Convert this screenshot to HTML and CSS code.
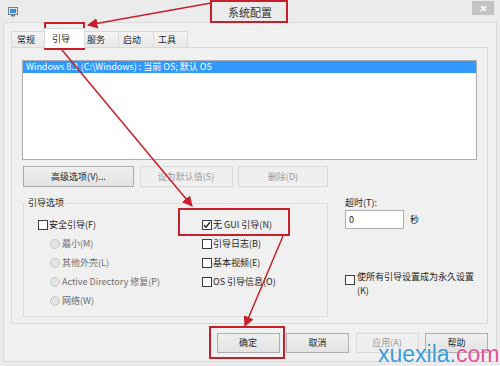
FILE: index.html
```html
<!DOCTYPE html>
<html lang="zh-CN">
<head>
<meta charset="UTF-8" />
<meta name="viewport" content="width=device-width, initial-scale=1" />
<title>系统配置</title>
<link rel="stylesheet" href="styles.css">
</head>
<body>

<div class="window">
  <div class="titlebar">
    <svg class="app-icon" width="10" height="10" viewBox="0 0 10 10">
      <rect x="0.5" y="0.5" width="9" height="7" fill="#dfe6ee" stroke="#6f7f90"/>
      <rect x="2" y="2" width="6" height="4" fill="#3d8fd6"/>
      <rect x="3" y="8" width="4" height="1.5" fill="#6f7f90"/>
    </svg>
    <div class="title">系统配置</div>
    <div class="close">
      <svg width="7" height="7" viewBox="0 0 7 7"><path d="M1 1 L6 6 M6 1 L1 6" stroke="#fff" stroke-width="1.6"/></svg>
    </div>
  </div>

  <div class="client">
    <div class="tabs">
      <div class="tab tab-general">常规</div>
      <div class="tab tab-boot active">引导</div>
      <div class="tab tab-services">服务</div>
      <div class="tab tab-startup">启动</div>
      <div class="tab tab-tools">工具</div>
    </div>

    <div class="panel">
      <div class="oslist">
        <div class="os-item selected">Windows 8.1 (C:\Windows) : 当前 OS; 默认 OS</div>
      </div>

      <div class="list-buttons">
        <button class="btn btn-advanced">高级选项(V)...</button>
        <button class="btn btn-default" disabled>设为默认值(S)</button>
        <button class="btn btn-delete" disabled>删除(D)</button>
      </div>

      <div class="lower">
        <fieldset class="group">
          <legend>引导选项</legend>
          <div class="group-cols">
            <div class="col col-left">
              <div class="opt"><span class="cb"></span>安全引导(F)</div>
              <div class="opt sub disabled"><span class="rb"></span>最小(M)</div>
              <div class="opt sub disabled"><span class="rb"></span>其他外壳(L)</div>
              <div class="opt sub disabled"><span class="rb"></span>Active Directory 修复(P)</div>
              <div class="opt sub disabled"><span class="rb"></span>网络(W)</div>
            </div>
            <div class="col">
              <div class="opt">
                <span class="cb">
                  <svg width="8" height="8" viewBox="0 0 8 8"><path d="M1 4.2 L3 6.3 L7 1.2" fill="none" stroke="#222" stroke-width="1.4"/></svg>
                </span>无 GUI 引导(N)
              </div>
              <div class="opt"><span class="cb"></span>引导日志(B)</div>
              <div class="opt"><span class="cb"></span>基本视频(E)</div>
              <div class="opt"><span class="cb"></span>OS 引导信息(O)</div>
            </div>
          </div>
        </fieldset>

        <div class="side">
          <div class="timeout-label">超时(T):</div>
          <div class="timeout-row">
            <div class="input">0</div>
            <span class="unit">秒</span>
          </div>
          <div class="perm">
            <span class="cb"></span>
            <span class="perm-text">使所有引导设置成为永久设置<br>(K)</span>
          </div>
        </div>
      </div>
    </div>

    <div class="footer">
      <button class="btn btn-footer">确定</button>
      <button class="btn btn-footer">取消</button>
      <button class="btn btn-footer" disabled>应用(A)</button>
      <button class="btn btn-footer">帮助</button>
    </div>
  </div>

  <!-- red annotation marks drawn over the dialog -->
  <svg class="marks" width="500" height="366" viewBox="0 0 500 366">
    <defs>
      <marker id="head" viewBox="0 0 10 10" refX="9" refY="5" markerWidth="7" markerHeight="7" orient="auto">
        <path d="M0 0 L10 5 L0 10 z" fill="#c8202a"/>
      </marker>
    </defs>
    <g fill="none" stroke="#c8202a" stroke-width="2">
      <rect x="211" y="1" width="76" height="21"/>
      <rect x="45" y="23" width="39" height="26"/>
      <rect x="179" y="209" width="110" height="26"/>
      <rect x="210" y="327" width="74" height="31"/>
    </g>
    <g stroke="#c8202a" stroke-width="1.5" marker-end="url(#head)">
      <line x1="211" y1="3" x2="88" y2="25"/>
      <line x1="62" y1="50" x2="192" y2="206"/>
      <line x1="283" y1="236" x2="245" y2="326"/>
    </g>
  </svg>

  <div class="watermark">xuexila.<span class="com">com</span></div>
</div>

</body>
</html>
```

FILE: styles.css
```css
body {
  margin: 0;
  width: 500px;
  height: 366px;
  overflow: hidden;
  background: #ebebeb;
  font-family: "Noto Sans CJK SC", "Noto Sans", sans-serif;
  font-size: 9px;
  color: #1e1e1e;
}
.window {
  position: relative;
  height: 366px;
  display: flex;
  flex-direction: column;
}

/* title bar */
.titlebar {
  height: 22px;
  flex: none;
  display: flex;
  align-items: flex-start;
  padding-left: 8px;
}
.app-icon {
  margin-top: 7px;
  flex: none;
}
.title {
  flex: 1;
  text-align: center;
  padding-left: 10px;
  padding-top: 2px;
  font-size: 11px;
  line-height: 20px;
  color: #333;
}
.close {
  width: 22px;
  height: 14px;
  margin: 1px 6px 0 0;
  background: #c2c2c2;
  display: flex;
  align-items: center;
  justify-content: center;
}

/* client area */
.client {
  flex: 1;
  margin: 0 3px 4px;
  border: 1px solid #dadada;
  background: #f0f0f0;
  padding: 8px 8px 0 7px;
  display: flex;
  flex-direction: column;
}

/* tabs */
.tabs {
  display: flex;
  align-items: flex-end;
  height: 16px;
  position: relative;
  z-index: 1;
}
.tab {
  height: 16px;
  box-sizing: border-box;
  border: 1px solid #d9d9d9;
  border-bottom: none;
  background: linear-gradient(#f3f3f3, #e9e9e9);
  padding-left: 4px;
  line-height: 15px;
  margin-left: -1px;
}
.tab-general { width: 34px; margin-left: 0; padding-left: 5px; }
.tab-boot { width: 41px; padding-left: 7px; }
.tab-services { width: 35px; padding-left: 2px; }
.tab-startup { width: 36px; padding-left: 4px; }
.tab-tools { width: 35px; padding-left: 4px; }
.tab.active {
  height: 20px;
  margin-bottom: -1px;
  background: #fff;
  line-height: 19px;
}

/* tab page */
.panel {
  height: 277px;
  box-sizing: border-box;
  border: 1px solid #d9d9d9;
  background: #f0f0f0;
  padding: 12px 10px 0;
}
.oslist {
  height: 100px;
  box-sizing: border-box;
  border: 1px solid #abadb3;
  background: #fff;
}
.os-item {
  height: 12px;
  line-height: 12px;
  padding-left: 3px;
}
.os-item.selected {
  background: #3399ff;
  color: #fff;
}

/* buttons */
.btn {
  height: 21px;
  box-sizing: border-box;
  border: 1px solid #adadad;
  background: linear-gradient(#efefef, #e3e3e3);
  font: inherit;
  line-height: 12px;
  color: #1e1e1e;
  padding: 0;
}
.btn:disabled {
  border-color: #d9d9d9;
  background: #efefef;
  color: #9c9c9c;
}
.list-buttons {
  display: flex;
  gap: 5.5px;
  margin: 6px 0 0 1px;
}
.btn-advanced { width: 111px; }
.btn-default { width: 93px; }
.btn-delete { width: 90px; }

/* lower section */
.lower {
  display: flex;
  margin: 10px 0 0 1px;
}
.group {
  margin: 0;
  width: 305px;
  height: 120px;
  box-sizing: border-box;
  border: 1px solid #dcdcdc;
  padding: 0;
}
.group legend {
  padding: 0 2px;
  margin-left: 2px;
  line-height: 12px;
}
.group-cols {
  display: flex;
  padding: 6px 0 0 14px;
}
.col-left { width: 164px; }
.opt {
  display: flex;
  align-items: center;
  height: 19px;
  white-space: nowrap;
}
.opt.sub { padding-left: 12px; }
.opt.disabled { color: #6d6d6d; }
.cb {
  width: 10px;
  height: 10px;
  box-sizing: border-box;
  border: 1px solid #3c3c3c;
  background: #fff;
  margin-right: 1px;
  flex: none;
  display: flex;
  align-items: center;
  justify-content: center;
}
.rb {
  width: 10px;
  height: 10px;
  box-sizing: border-box;
  border: 1px solid #c6c6c6;
  border-radius: 50%;
  background: #e4e4e4;
  margin-right: 2px;
  flex: none;
}

.side {
  margin-left: 17px;
  display: flex;
  flex-direction: column;
}
.timeout-label {
  height: 12px;
  line-height: 12px;
}
.timeout-row {
  display: flex;
  align-items: center;
  margin-top: 1px;
}
.input {
  width: 59px;
  height: 19px;
  box-sizing: border-box;
  border: 1px solid #abadb3;
  background: #fff;
  padding-left: 3px;
  line-height: 17px;
}
.unit { margin-left: 6px; }
.perm {
  display: flex;
  align-items: flex-start;
  margin-top: 41px;
}
.perm .cb { margin-top: 5px; margin-right: 2px; }
.perm-text { line-height: 14px; }

/* dialog buttons */
.footer {
  display: flex;
  justify-content: flex-end;
  gap: 6.5px;
  margin-top: 9px;
}
.btn-footer {
  width: 63px;
  height: 20px;
}

/* overlays */
.marks {
  position: absolute;
  left: 0;
  top: 0;
  pointer-events: none;
}
.watermark {
  position: absolute;
  left: 378px;
  top: 349.5px;
  font-family: "Liberation Sans", Arial, sans-serif;
  font-size: 23px;
  line-height: 8px;
  color: #3a9ad8;
  text-shadow: 0 0 2px #fff;
}
.watermark .com { color: #e8509a; }
```
